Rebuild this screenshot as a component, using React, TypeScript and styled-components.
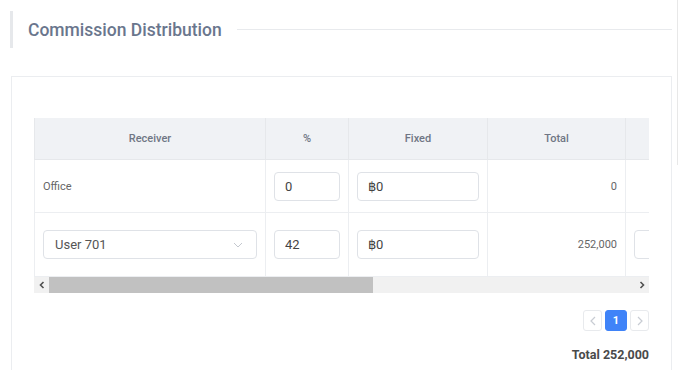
import styled, { createGlobalStyle } from "styled-components";

const GlobalStyle = createGlobalStyle`
  html, body {
    margin: 0;
    padding: 0;
    background: #fff;
    font-family: Roboto, "Liberation Sans", Arial, sans-serif;
  }
`;

const columns = [
  { key: "receiver", label: "Receiver", width: 231 },
  { key: "pct", label: "%", width: 83 },
  { key: "fixed", label: "Fixed", width: 139 },
  { key: "total", label: "Total", width: 138 },
  { key: "note", label: "", width: 160 },
];

export default function App() {
  return (
    <Page>
      <GlobalStyle />
      <Main>
        <SectionHeader>
          <SectionTitle>Commission Distribution</SectionTitle>
          <Rule />
        </SectionHeader>
        <Card>
          <TableViewport>
            <Table>
              <colgroup>
                {columns.map(c => (
                  <col key={c.key} style={{ width: c.width }} />
                ))}
              </colgroup>
              <thead>
                <tr>
                  {columns.map(c => (
                    <Th key={c.key}>{c.label}</Th>
                  ))}
                </tr>
              </thead>
              <tbody>
                <Tr $height={53}>
                  <Td>
                    <PlainText>Office</PlainText>
                  </Td>
                  <Td>
                    <Input defaultValue="0" />
                  </Td>
                  <Td>
                    <Input defaultValue="฿0" />
                  </Td>
                  <Td $align="right">0</Td>
                  <Td />
                </Tr>
                <Tr $height={64}>
                  <Td>
                    <Select>
                      <span>User 701</span>
                      <svg width="12" height="12" viewBox="0 0 12 12">
                        <path d="M2 4l4 4 4-4" fill="none" stroke="#c4c8cf" strokeWidth="1" />
                      </svg>
                    </Select>
                  </Td>
                  <Td>
                    <Input defaultValue="42" />
                  </Td>
                  <Td>
                    <Input defaultValue="฿0" />
                  </Td>
                  <Td $align="right">252,000</Td>
                  <Td>
                    <Input defaultValue="" />
                  </Td>
                </Tr>
              </tbody>
            </Table>
          </TableViewport>
          <ScrollBar>
            <Arrow>
              <svg width="6" height="8" viewBox="0 0 6 8">
                <path d="M4.5 1L1.5 4l3 3" fill="none" stroke="#505050" strokeWidth="1.6" />
              </svg>
            </Arrow>
            <Track>
              <Thumb style={{ width: 324 }} />
            </Track>
            <Arrow>
              <svg width="6" height="8" viewBox="0 0 6 8">
                <path d="M1.5 1l3 3-3 3" fill="none" stroke="#505050" strokeWidth="1.6" />
              </svg>
            </Arrow>
          </ScrollBar>
          <Pager>
            <PageBtn>
              <svg width="8" height="10" viewBox="0 0 8 10">
                <path d="M6 1L2 5l4 4" fill="none" stroke="#c8ccd3" strokeWidth="1.2" />
              </svg>
            </PageBtn>
            <PageBtn $active>1</PageBtn>
            <PageBtn>
              <svg width="8" height="10" viewBox="0 0 8 10">
                <path d="M2 1l4 4-4 4" fill="none" stroke="#c8ccd3" strokeWidth="1.2" />
              </svg>
            </PageBtn>
          </Pager>
          <GrandTotal>Total 252,000</GrandTotal>
        </Card>
      </Main>
      <EdgeLine />
    </Page>
  );
}

const Page = styled.div`
  display: flex;
  align-items: flex-start;
  width: 680px;
  height: 370px;
  overflow: hidden;
`;

const Main = styled.div`
  width: 662px;
  padding: 11px 0 0 10px;
`;

const EdgeLine = styled.div`
  width: 1px;
  height: 165px;
  margin-left: 5px;
  background: #e8e8e8;
`;

const SectionHeader = styled.div`
  display: flex;
  align-items: center;
  height: 37px;
  border-left: 3px solid #e6e8eb;
  padding-left: 15px;
`;

const SectionTitle = styled.h2`
  margin: 0;
  font-size: 17.5px;
  font-weight: 500;
  color: #6a768d;
  white-space: nowrap;
`;

const Rule = styled.div`
  flex: 1;
  height: 1px;
  margin-left: 15px;
  background: #e8eaed;
`;

const Card = styled.div`
  margin-top: 28px;
  margin-left: 1px;
  border: 1px solid #ebedf0;
  border-bottom: none;
  height: 300px;
  padding: 41px 22px 0 22px;
  box-sizing: border-box;
`;

const TableViewport = styled.div`
  width: 615px;
  overflow: hidden;
`;

const Table = styled.table`
  table-layout: fixed;
  border-collapse: collapse;
  width: 751px;
  font-size: 11px;
`;

const Th = styled.th`
  height: 41px;
  padding: 0;
  background: #f0f2f5;
  border: 1px solid #e6e8eb;
  border-top: none;
  color: #6f7684;
  font-weight: 500;
  font-size: 11px;
  text-align: center;
`;

const Tr = styled.tr<{ $height: number }>`
  height: ${({ $height }) => $height}px;
`;

const Td = styled.td<{ $align?: string }>`
  padding: 0 8px;
  border: 1px solid #eceef1;
  color: #666;
  font-size: 11px;
  text-align: ${({ $align }) => $align ?? "left"};
  vertical-align: middle;
`;

const PlainText = styled.span`
  color: #666;
`;

const Input = styled.input`
  width: 100%;
  height: 29px;
  box-sizing: border-box;
  border: 1px solid #dfe2e7;
  border-radius: 4px;
  padding: 0 10px;
  font-family: inherit;
  font-size: 13px;
  color: #444;
  outline: none;
`;

const Select = styled.div`
  display: flex;
  align-items: center;
  justify-content: space-between;
  height: 29px;
  box-sizing: border-box;
  border: 1px solid #dfe2e7;
  border-radius: 4px;
  padding: 0 12px 0 11px;
  font-size: 13px;
  color: #555;
`;

const ScrollBar = styled.div`
  display: flex;
  align-items: center;
  width: 615px;
  height: 16px;
  background: #f1f1f1;
`;

const Arrow = styled.div`
  display: flex;
  align-items: center;
  justify-content: center;
  width: 15px;
  height: 16px;
`;

const Track = styled.div`
  flex: 1;
  height: 16px;
`;

const Thumb = styled.div`
  height: 16px;
  background: #c1c1c1;
`;

const Pager = styled.div`
  display: flex;
  justify-content: flex-end;
  gap: 3px;
  width: 615px;
  margin-top: 17px;
`;

const PageBtn = styled.div<{ $active?: boolean }>`
  display: flex;
  align-items: center;
  justify-content: center;
  width: ${({ $active }) => ($active ? 22 : 19)}px;
  height: 21px;
  box-sizing: border-box;
  border-radius: 3px;
  border: 1px solid ${({ $active }) => ($active ? "#3f83f8" : "#e8eaed")};
  background: ${({ $active }) => ($active ? "#3f83f8" : "#fff")};
  color: #fff;
  font-size: 11px;
  font-weight: 700;
`;

const GrandTotal = styled.div`
  width: 615px;
  margin-top: 16px;
  text-align: right;
  font-size: 12.5px;
  font-weight: 700;
  color: #4a4a4a;
`;
